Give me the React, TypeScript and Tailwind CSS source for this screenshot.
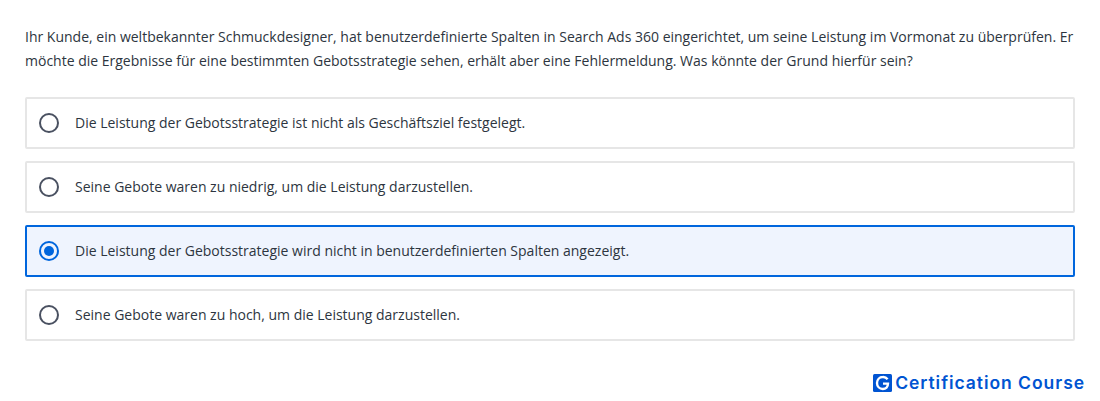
const options = [
  { text: 'Die Leistung der Gebotsstrategie ist nicht als Geschäftsziel festgelegt.', selected: false },
  { text: 'Seine Gebote waren zu niedrig, um die Leistung darzustellen.', selected: false },
  { text: 'Die Leistung der Gebotsstrategie wird nicht in benutzerdefinierten Spalten angezeigt.', selected: true },
  { text: 'Seine Gebote waren zu hoch, um die Leistung darzustellen.', selected: false },
]

function Radio({ selected }: { selected: boolean }) {
  if (selected) {
    return (
      <span className="flex h-5 w-5 shrink-0 items-center justify-center rounded-full border-[2.5px] border-[#0066dd]">
        <span className="h-2.5 w-2.5 rounded-full bg-[#0066dd]" />
      </span>
    )
  }
  return <span className="h-5 w-5 shrink-0 rounded-full border-[2.5px] border-[#4a5161]" />
}

export default function App() {
  return (
    <div className="h-[401px] w-[1100px] overflow-hidden bg-white font-['Open_Sans',sans-serif] text-[#2d3540]">
      <div className="px-[25px] pt-[25px]">
        <p className="text-[14px] leading-[24px]">
          Ihr Kunde, ein weltbekannter Schmuckdesigner, hat benutzerdefinierte Spalten in Search Ads 360 eingerichtet, um seine Leistung im Vormonat zu überprüfen. Er möchte die Ergebnisse für eine bestimmten Gebotsstrategie sehen, erhält aber eine Fehlermeldung. Was könnte der Grund hierfür sein?
        </p>

        <div className="mt-[24px] flex flex-col gap-3">
          {options.map((o) => (
            <div
              key={o.text}
              className={
                o.selected
                  ? 'flex h-[52px] items-center gap-[16px] rounded-[2px] border-2 border-[#0066dd] bg-[#eff4fe] pl-[12px] text-[14px]'
                  : 'flex h-[52px] items-center gap-[16px] rounded-[2px] border-2 border-[#e6e6e6] bg-white pl-[12px] text-[14px]'
              }
            >
              <Radio selected={o.selected} />
              <span className="mb-[2px]">{o.text}</span>
            </div>
          ))}
        </div>
      </div>

      {/* Logo */}
      <div className="mt-[33px] flex items-center justify-end gap-[3px] pr-[15px]">
        <svg width="19" height="18" viewBox="0 0 19 18">
          <rect width="19" height="18" rx="1.5" fill="#0054d2" />
          <path d="M14.6 5.2A5.7 5.7 0 0 0 9.8 3C6.5 3 4 5.6 4 9s2.5 6 5.8 6c3 0 5.2-2 5.2-5.4H10" fill="none" stroke="#fff" strokeWidth="2.4" />
        </svg>
        <span className="font-['Inter',sans-serif] text-[17.5px] leading-[18px] font-semibold tracking-[0.95px] text-[#0054d2]">
          Certification Course
        </span>
      </div>
    </div>
  )
}
